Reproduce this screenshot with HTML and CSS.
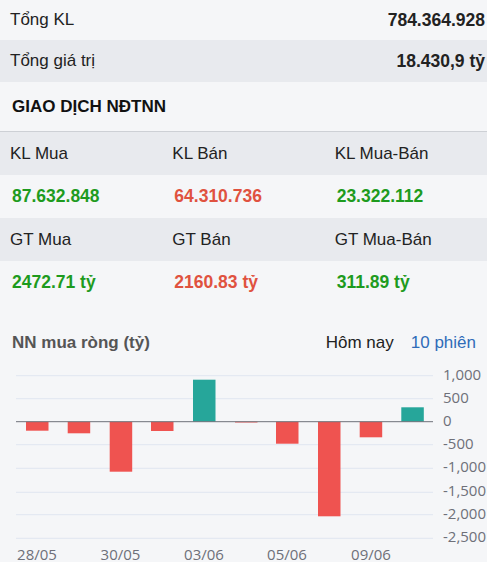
FILE: index.html
```html
<!DOCTYPE html>
<html lang="vi">
<head>
<meta charset="utf-8">
<link rel="stylesheet" href="styles.css">
</head>
<body>
<div class="page">
  <div class="sum-row">
    <span>Tổng KL</span><span class="b">784.364.928</span>
  </div>
  <div class="sum-row alt">
    <span>Tổng giá trị</span><span class="b">18.430,9 tỷ</span>
  </div>
  <div class="heading">GIAO DỊCH NĐTNN</div>
  <div class="grid">
    <div class="cell lbl">KL Mua</div>
    <div class="cell lbl">KL Bán</div>
    <div class="cell lbl">KL Mua-Bán</div>
    <div class="cell val up">87.632.848</div>
    <div class="cell val down">64.310.736</div>
    <div class="cell val up">23.322.112</div>
    <div class="cell lbl">GT Mua</div>
    <div class="cell lbl">GT Bán</div>
    <div class="cell lbl">GT Mua-Bán</div>
    <div class="cell val up">2472.71 tỷ</div>
    <div class="cell val down">2160.83 tỷ</div>
    <div class="cell val up">311.89 tỷ</div>
  </div>
  <div class="chart-head">
    <span class="chart-title">NN mua ròng (tỷ)</span>
    <div class="tabs">
      <span class="tab">Hôm nay</span>
      <span class="tab active">10 phiên</span>
    </div>
  </div>
  <svg class="chart" width="487" height="202" viewBox="0 0 487 202">
    <g class="gridlines">
      <line x1="16" x2="433" y1="15.7" y2="15.7"/>
      <line x1="16" x2="433" y1="38.7" y2="38.7"/>
      <line x1="16" x2="433" y1="84.7" y2="84.7"/>
      <line x1="16" x2="433" y1="108.3" y2="108.3"/>
      <line x1="16" x2="433" y1="132.3" y2="132.3"/>
      <line x1="16" x2="433" y1="154.7" y2="154.7"/>
      <line x1="16" x2="433" y1="178.3" y2="178.3"/>
    </g>
    <g class="neg">
      <rect x="26" y="61.7" width="22.5" height="9"/>
      <rect x="67.7" y="61.7" width="22.5" height="11.6"/>
      <rect x="109.7" y="61.7" width="22.5" height="50"/>
      <rect x="151" y="61.7" width="22.5" height="9.3"/>
      <rect x="235" y="61.7" width="22.5" height="0.8"/>
      <rect x="276" y="61.7" width="22.5" height="22"/>
      <rect x="318" y="61.7" width="22.5" height="94.6"/>
      <rect x="359.7" y="61.7" width="22.5" height="15.6"/>
    </g>
    <g class="pos">
      <rect x="193" y="19.7" width="22.5" height="42"/>
      <rect x="401.3" y="47.3" width="22.5" height="14.4"/>
    </g>
    <line class="axis" x1="16" x2="433" y1="61.7" y2="61.7"/>
    <g class="ylab">
      <text x="443" y="15.7">1,000</text>
      <text x="443" y="38.7">500</text>
      <text x="443" y="61.7">0</text>
      <text x="443" y="84.7">-500</text>
      <text x="443" y="108.3">-1,000</text>
      <text x="443" y="132.3">-1,500</text>
      <text x="443" y="154.7">-2,000</text>
      <text x="443" y="178.3">-2,500</text>
    </g>
    <g class="xlab">
      <text x="37" y="200">28/05</text>
      <text x="120.5" y="200">30/05</text>
      <text x="204" y="200">03/06</text>
      <text x="287" y="200">05/06</text>
      <text x="371" y="200">09/06</text>
    </g>
  </svg>
</div>
</body>
</html>
```

FILE: styles.css
```css
html, body {
  margin: 0;
  padding: 0;
  background: #f5f6f8;
}
.page {
  width: 487px;
  height: 562px;
  overflow: hidden;
  font-family: "Liberation Sans", Arial, sans-serif;
  font-size: 17px;
  color: #222;
  background: #f5f6f8;
}
.sum-row {
  display: flex;
  justify-content: space-between;
  align-items: center;
  height: 40px;
  padding: 0 2px 0 10px;
}
.sum-row.alt {
  height: 42px;
  background: #e8eaee;
}
.b {
  font-weight: bold;
  font-size: 17.5px;
}
.heading {
  height: 50px;
  box-sizing: border-box;
  padding-left: 12px;
  display: flex;
  align-items: center;
  font-weight: bold;
  font-size: 17px;
  color: #111;
  border-bottom: 1px solid #cdd0d5;
}
.grid {
  display: grid;
  grid-template-columns: repeat(3, 1fr);
}
.cell {
  display: flex;
  align-items: center;
  height: 43px;
  padding-left: 10px;
}
.cell.lbl {
  background: #e8eaee;
}
.cell.val {
  padding-left: 12px;
  font-weight: bold;
  font-size: 17.5px;
}
.up { color: #1e9b1e; }
.down { color: #e0523f; }
.chart-head {
  height: 56px;
  display: flex;
  justify-content: space-between;
  align-items: flex-end;
  padding: 0 11px 7px 12px;
  box-sizing: border-box;
}
.chart-title {
  font-weight: bold;
  color: #555;
}
.tabs {
  display: flex;
  gap: 17px;
}
.tab.active {
  color: #2f6cb8;
}
.chart {
  display: block;
}
.gridlines line {
  stroke: #e0e6f1;
  stroke-width: 1;
}
.axis {
  stroke: #6e7079;
  stroke-width: 1;
}
.neg rect { fill: #ef5350; }
.pos rect { fill: #26a69a; }
.ylab text {
  font-family: "Open Sans", "Liberation Sans", sans-serif;
  font-size: 15px;
  fill: #6e7079;
  dominant-baseline: middle;
}
.xlab text {
  font-family: "Open Sans", "Liberation Sans", sans-serif;
  font-size: 15px;
  fill: #6e7079;
  text-anchor: middle;
}
```
